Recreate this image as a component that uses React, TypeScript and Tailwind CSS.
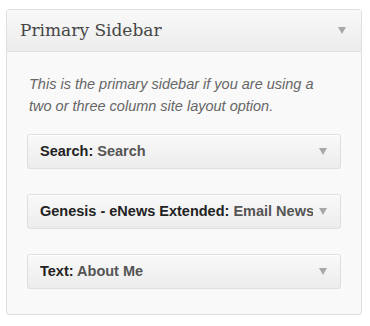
import React from "react";

const Arrow = () => (
  <svg width="8" height="7" viewBox="0 0 8 7" className="shrink-0">
    <polygon points="0,0 8,0 4,7" fill="#a8a8a8" />
  </svg>
);

const widgets = [
  { type: "Search", title: "Search" },
  { type: "Genesis - eNews Extended", title: "Email Newsletter" },
  { type: "Text", title: "About Me" },
];

export default function App() {
  return (
    <div className="w-[370px] h-[326px] bg-white pt-[9px] pl-[6px]">
      <div className="w-[356px] h-[306px] border border-[#dfdfdf] rounded-[3px] bg-[#f9f9f9] overflow-hidden">
        {/* Header */}
        <div className="h-[42px] flex items-center justify-between pl-[13px] pr-[15px] border-b border-[#dfdfdf] bg-gradient-to-b from-[#f9f9f9] to-[#ececec]">
          <span className="text-[17px] text-[#464646] font-['DejaVu_Serif',serif]">Primary Sidebar</span>
          <Arrow />
        </div>

        {/* Body */}
        <div className="pt-[21px] px-[20px] font-['Liberation_Sans',Arial,sans-serif]">
          <p className="pl-[2px] pr-[12px] text-[14.5px] leading-[22px] italic text-[#666]">
            This is the primary sidebar if you are using a two or three column site layout option.
          </p>
          <div className="mt-[17px] flex flex-col gap-[25px]">
            {widgets.map((w) => (
              <div
                key={w.type}
                className="h-[35px] flex items-center justify-between pl-[12px] pr-[13px] border border-[#dfdfdf] rounded-[3px] bg-gradient-to-b from-[#f9f9f9] to-[#ececec] shadow-[inset_0_1px_0_#fff]"
              >
                <span className="text-[14.5px] font-bold text-[#222] whitespace-nowrap overflow-hidden mr-[6px]">
                  {w.type}: <span className="text-[#555]">{w.title}</span>
                </span>
                <Arrow />
              </div>
            ))}
          </div>
        </div>
      </div>
    </div>
  );
}
